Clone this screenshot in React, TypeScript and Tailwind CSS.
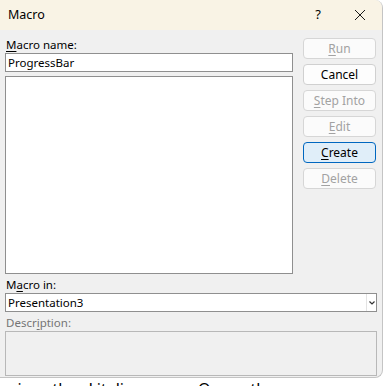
import React from "react";

const font = { fontFamily: '"Noto Sans", "Open Sans", sans-serif' };

function DlgButton({
  label,
  accel,
  disabled,
  primary,
}: {
  label: string;
  accel?: number;
  disabled?: boolean;
  primary?: boolean;
}) {
  const text =
    accel === undefined ? (
      label
    ) : (
      <>
        {label.slice(0, accel)}
        <span className="underline underline-offset-2">{label[accel]}</span>
        {label.slice(accel + 1)}
      </>
    );
  return (
    <button
      className={
        "flex h-[21px] w-[73px] items-center justify-center rounded-[4px] border text-[12px] leading-none " +
        (primary
          ? "border-[#0067c0] bg-[#e0eef9] text-black"
          : disabled
            ? "border-[#d6d6d6] bg-[#fbfbfb] text-[#a2a2a2]"
            : "border-[#d0d0d0] bg-[#fdfdfd] text-black")
      }
    >
      {text}
    </button>
  );
}

export default function App() {
  return (
    <div className="relative h-[386px] w-[385px] overflow-hidden bg-white" style={font}>
      <div className="flex h-[378px] w-[383px] flex-col overflow-hidden rounded-r-[8px] border-r border-b border-[#c4c4c4] bg-[#f0f0f0]">
        {/* title bar */}
        <div className="flex h-[30px] shrink-0 items-center bg-[#f9f3e5] text-[12.5px] text-black">
          <span className="ml-[8px]">Macro</span>
          <span className="ml-auto mr-[33px] text-[13px]">?</span>
          <svg width="12" height="12" viewBox="0 0 12 12" className="mr-[16px]">
            <path d="M1 1 L11 11 M11 1 L1 11" stroke="#1a1a1a" strokeWidth="1" />
          </svg>
        </div>

        <div className="flex flex-1 flex-col pl-[5px] text-[11.5px] text-black">
          <div className="flex">
            <div className="flex w-[288px] flex-col">
              <div className="flex h-[23px] items-end pb-[3px] pl-[1px] leading-none">
                <span>
                  <span className="underline underline-offset-2">M</span>acro name:
                </span>
              </div>
              <div className="flex h-[19px] items-center border border-[#8f8f8f] bg-white pl-[2px] leading-none">
                ProgressBar
              </div>
              <div className="mt-[4px] h-[198px] border border-[#8f8f8f] bg-white" />
            </div>
            <div className="ml-[10px] mt-[8px] flex flex-col gap-[5px]">
              <DlgButton label="Run" accel={0} disabled />
              <DlgButton label="Cancel" />
              <DlgButton label="Step Into" accel={0} disabled />
              <DlgButton label="Edit" accel={0} disabled />
              <DlgButton label="Create" accel={0} primary />
              <DlgButton label="Delete" accel={0} disabled />
            </div>
          </div>

          <div className="flex h-[19px] items-end pb-[3px] pl-[1px] leading-none">
            <span>
              M<span className="underline underline-offset-2">a</span>cro in:
            </span>
          </div>
          <div className="flex h-[19px] w-[372px] items-center border border-[#8f8f8f] bg-white leading-none">
            <span className="pl-[2px]">Presentation3</span>
            <div className="ml-auto flex h-full w-[10px] items-center justify-center border-l border-[#e3e3e3]">
              <svg width="6" height="4" viewBox="0 0 6 4">
                <path d="M0.5 0.5 L3 3 L5.5 0.5" stroke="#333" strokeWidth="1.2" fill="none" />
              </svg>
            </div>
          </div>
          <div className="flex h-[19px] items-end pb-[3px] pl-[1px] leading-none text-[#757575]">
            <span>
              Descr<span className="underline underline-offset-2">i</span>ption:
            </span>
          </div>
          <div className="h-[45px] w-[372px] border border-[#b8b8b8] bg-[#f0f0f0]" />
        </div>
      </div>
      <p className="mt-[1px] whitespace-nowrap text-[16px] leading-[20px] text-black [word-spacing:7px]">
        using the Litelina app. Open the
      </p>
    </div>
  );
}
